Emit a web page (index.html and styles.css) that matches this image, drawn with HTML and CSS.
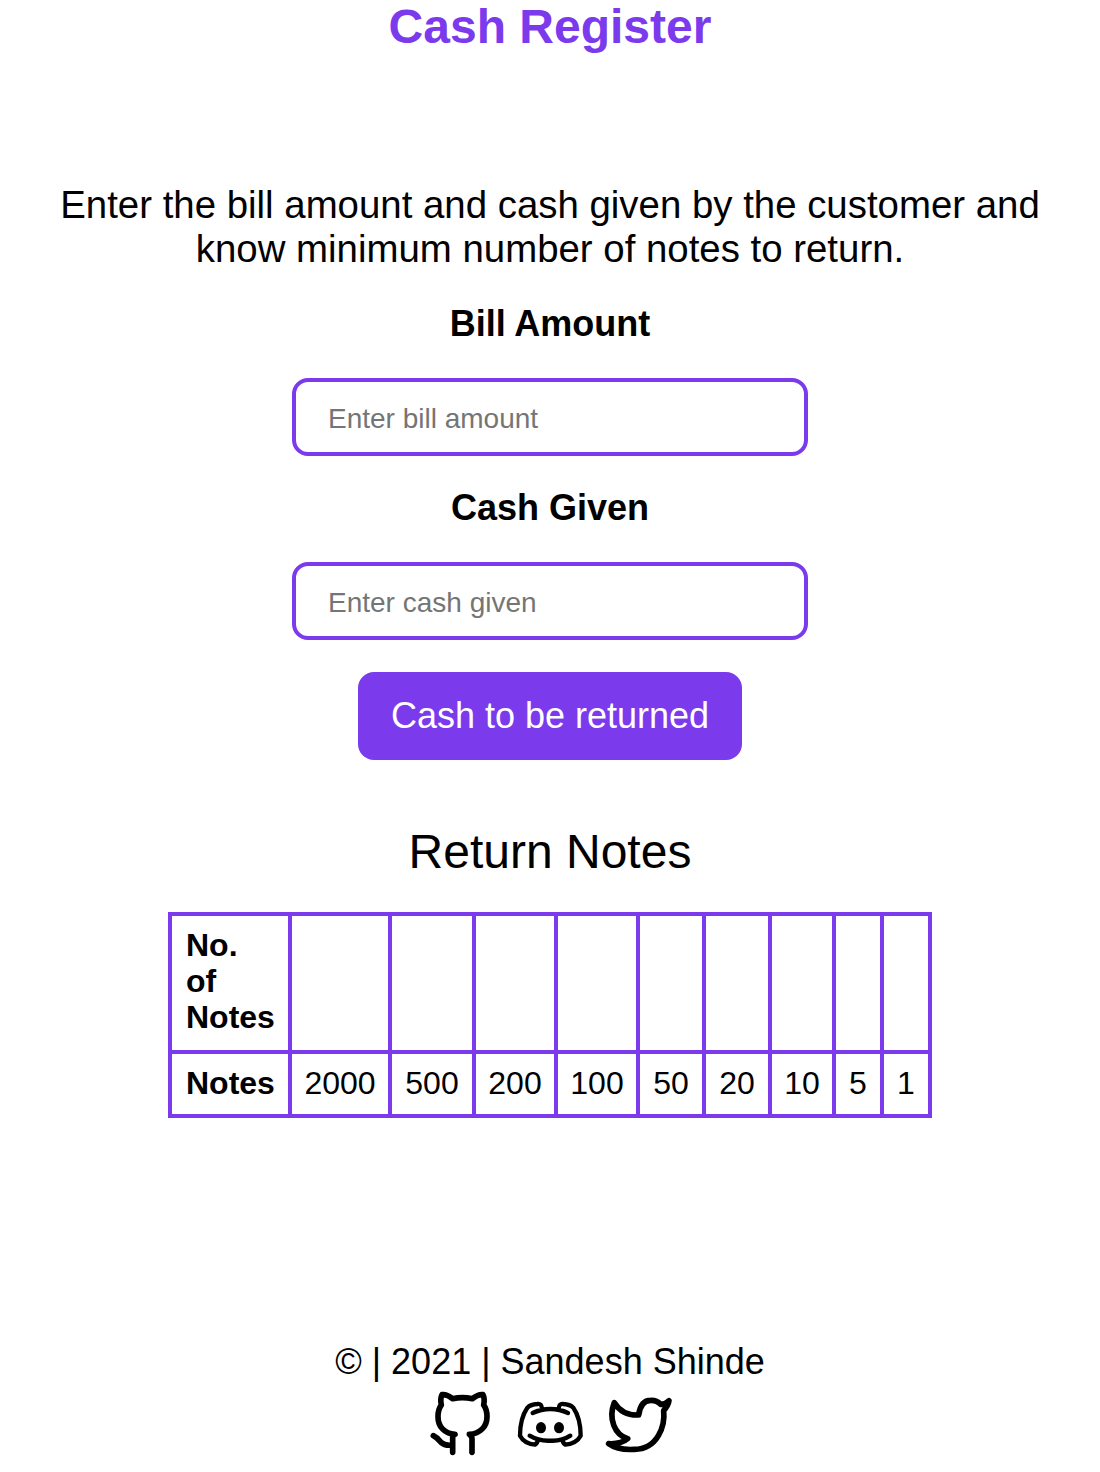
FILE: index.html
```html
<!DOCTYPE html>
<html lang="en">
<head>
<meta charset="utf-8">
<title>Cash Register</title>
<link rel="stylesheet" href="styles.css">
</head>
<body>
<header><h1 class="title">Cash Register</h1></header>
<main class="main">
  <p class="description">Enter the bill amount and cash given by the customer and know minimum number of notes to return.</p>
  <label class="label" for="bill">Bill Amount</label>
  <input class="field" id="bill" type="text" placeholder="Enter bill amount">
  <label class="label" for="cash">Cash Given</label>
  <input class="field" id="cash" type="text" placeholder="Enter cash given">
  <button class="button">Cash to be returned</button>
  <table class="notes">
    <caption class="caption">Return Notes</caption>
    <colgroup><col class="c-head"><col class="c-2000"><col class="c-500"><col class="c-hundreds"><col class="c-hundreds"><col class="c-tens"><col class="c-tens"><col class="c-10"><col class="c-unit"><col class="c-unit"></colgroup>
    <tr class="row-count"><th>No.<br>of<br>Notes</th><td></td><td></td><td></td><td></td><td></td><td></td><td></td><td></td><td></td></tr>
    <tr class="row-value"><th>Notes</th><td>2000</td><td>500</td><td>200</td><td>100</td><td>50</td><td>20</td><td>10</td><td>5</td><td>1</td></tr>
  </table>
</main>
<footer class="footer">
  <p class="copyright">© | 2021 | Sandesh Shinde</p>
  <nav class="links">
    <a href="#" aria-label="GitHub"><svg class="icon" viewBox="-15 30 270 210"><path class="thick" d="M98 217V172Q98 165 105 163C73 161 54 139 54 110Q54 88 64 75Q60 56 66 44Q80 42 98 56Q127 50 157 56Q175 42 189 44Q195 56 191 75Q201 88 201 110C201 139 181 161 148 163Q156 168 156 176V217M98 195Q75 198 63 187Q51 172 40 167"/></svg></a>
    <a href="#" aria-label="Discord"><svg class="icon" viewBox="0 30 270 210"><path class="medium" d="M83 99Q108 87 136 87T189 99M111 86Q110 70 97 72Q77 73 67 83Q45 115 45 167Q57 190 90 194Q98 189 98 180M161 86Q162 70 175 72Q195 73 205 83Q227 115 227 167Q215 190 181 194Q173 189 173 180M74 167Q102 184 136 182Q170 184 196 167"/><ellipse cx="108" cy="143" rx="15" ry="17"/><ellipse cx="162" cy="143" rx="15" ry="17"/></svg></a>
    <a href="#" aria-label="Twitter"><svg class="icon" viewBox="0 30 270 210"><path class="thick" d="M131 105C135 76 146 61 167 61Q185 60 197 73Q211 73 222 62Q220 76 206 92C211 137 188 208 118 208Q69 211 41 191Q78 193 98 176C59 164 39 116 58 68Q82 107 131 105Z"/></svg></a>
  </nav>
</footer>
</body>
</html>
```
FILE: styles.css
```css
* { box-sizing: border-box; }
body {
  margin: 0;
  background: #fff;
  color: #000;
  font-family: "Liberation Sans", Arial, sans-serif;
  text-align: center;
}
.title {
  margin: 0;
  padding-bottom: 2px;
  color: #7c3aed;
  font-size: 48px;
  line-height: 53px;
}
.main {
  display: flex;
  flex-direction: column;
  align-items: center;
  padding-top: 128px;
}
.description {
  width: 1020px;
  margin: 0 0 32px;
  font-size: 38.4px;
  line-height: 44px;
}
.label {
  margin-bottom: 34px;
  font-size: 36px;
  font-weight: bold;
  line-height: 41px;
}
.field {
  width: 516px;
  height: 78px;
  margin-bottom: 31px;
  padding: 4px 32px 0;
  border: 4px solid #7c3aed;
  border-radius: 16px;
  font: 28px "Liberation Sans", Arial, sans-serif;
}
.field::placeholder { color: #757575; }
.button {
  width: 384px;
  height: 88px;
  margin: 1px 0 64px;
  padding: 0;
  border: 0;
  border-radius: 16px;
  background: #7c3aed;
  color: #fff;
  font: 36px "Liberation Sans", Arial, sans-serif;
}
.notes {
  width: 764px;
  table-layout: fixed;
  border-collapse: collapse;
  font-size: 32px;
  line-height: 36px;
}
.caption {
  padding-bottom: 33px;
  font-size: 48px;
  line-height: 55px;
}
.notes th, .notes td {
  padding: 0 0 2px;
  border: 4px solid #7c3aed;
}
.notes th {
  padding-left: 14px;
  text-align: left;
}
.row-count { height: 138px; }
.row-value { height: 64px; }
.notes .row-count th { padding-bottom: 4px; }
.c-head { width: 120px; }
.c-2000 { width: 100px; }
.c-500 { width: 84px; }
.c-hundreds { width: 82px; }
.c-tens { width: 66px; }
.c-10 { width: 64px; }
.c-unit { width: 48px; }
.footer { padding-top: 223px; }
.copyright {
  margin: 0;
  font-size: 36px;
  line-height: 41px;
}
.links {
  display: flex;
  justify-content: center;
  padding-top: 8px;
}
.icon {
  display: block;
  width: 90px;
  height: 70px;
}
.icon path {
  fill: none;
  stroke: #000;
  stroke-linecap: round;
  stroke-linejoin: round;
}
.icon .thick { stroke-width: 17px; }
.icon .medium { stroke-width: 13px; }
```
